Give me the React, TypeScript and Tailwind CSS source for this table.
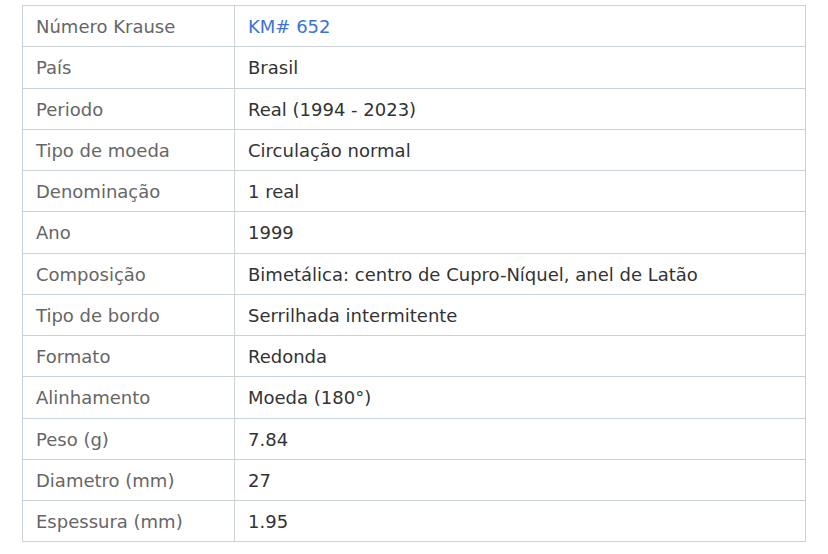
import React from 'react'

const rows: { label: string; value: string; link?: boolean }[] = [
  { label: 'Número Krause', value: 'KM# 652', link: true },
  { label: 'País', value: 'Brasil' },
  { label: 'Periodo', value: 'Real (1994 - 2023)' },
  { label: 'Tipo de moeda', value: 'Circulação normal' },
  { label: 'Denominação', value: '1 real' },
  { label: 'Ano', value: '1999' },
  { label: 'Composição', value: 'Bimetálica: centro de Cupro-Níquel, anel de Latão' },
  { label: 'Tipo de bordo', value: 'Serrilhada intermitente' },
  { label: 'Formato', value: 'Redonda' },
  { label: 'Alinhamento', value: 'Moeda (180°)' },
  { label: 'Peso (g)', value: '7.84' },
  { label: 'Diametro (mm)', value: '27' },
  { label: 'Espessura (mm)', value: '1.95' },
]

export default function App() {
  return (
    <div className="min-h-[554px] bg-white pt-[5px] pl-[22px] [font-family:'DejaVu_Sans',Verdana,sans-serif] text-[18px]">
      <table className="w-[784px] border-collapse">
        <tbody>
          {rows.map((r) => (
            <tr key={r.label} className="h-[41.25px]">
              <td className="w-[212px] border border-[#c9d1d9] px-[13px] pt-[1px] align-middle text-[#666666]">
                {r.label}
              </td>
              <td className="border border-[#c9d1d9] px-[13px] pt-[1px] align-middle text-[#333333]">
                {r.link ? <a className="text-[#3d72d6]">{r.value}</a> : r.value}
              </td>
            </tr>
          ))}
        </tbody>
      </table>
    </div>
  )
}
